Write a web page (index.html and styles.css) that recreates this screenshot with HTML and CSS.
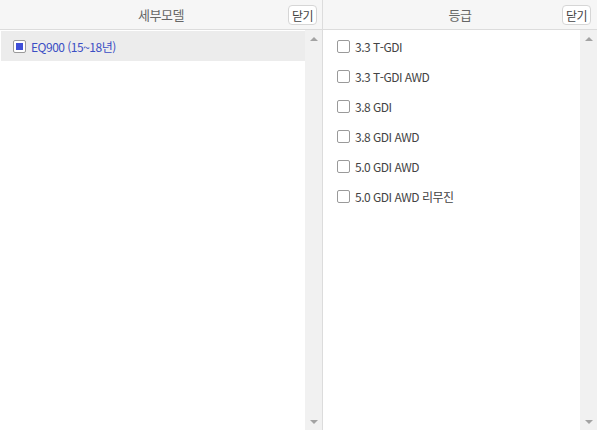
FILE: index.html
```html
<!DOCTYPE html>
<html lang="ko">
<head>
  <meta charset="UTF-8">
  <title>세부모델 / 등급</title>
  <link rel="stylesheet" href="styles.css">
</head>
<body>
  <div class="picker">
    <div class="panel panel-model">
      <div class="panel-head">
        <span class="panel-title">세부모델</span>
        <button class="close-btn">닫기</button>
      </div>
      <div class="panel-body">
        <ul class="opt-list">
          <li class="opt selected"><span class="box"></span>EQ900 (15~18년)</li>
        </ul>
        <div class="scrollbar">
          <span class="arrow up"></span>
          <span class="arrow down"></span>
        </div>
      </div>
    </div>
    <div class="panel panel-grade">
      <div class="panel-head">
        <span class="panel-title">등급</span>
        <button class="close-btn">닫기</button>
      </div>
      <div class="panel-body">
        <ul class="opt-list">
          <li class="opt"><span class="box"></span>3.3 T-GDI</li>
          <li class="opt"><span class="box"></span>3.3 T-GDI AWD</li>
          <li class="opt"><span class="box"></span>3.8 GDI</li>
          <li class="opt"><span class="box"></span>3.8 GDI AWD</li>
          <li class="opt"><span class="box"></span>5.0 GDI AWD</li>
          <li class="opt"><span class="box"></span>5.0 GDI AWD 리무진</li>
        </ul>
        <div class="scrollbar">
          <span class="arrow up"></span>
          <span class="arrow down"></span>
        </div>
      </div>
    </div>
  </div>
</body>
</html>
```
FILE: styles.css
```css
body {
  margin: 0;
  font-family: "Noto Sans CJK KR", "Noto Sans", sans-serif;
  font-size: 12px;
  color: #333;
  background: #fff;
}
.picker {
  display: flex;
  height: 430px;
  width: 597px;
  overflow: hidden;
}
.panel {
  display: flex;
  flex-direction: column;
}
.panel-model {
  width: 322px;
  border-right: 1px solid #dcdcdc;
}
.panel-grade {
  flex: 1;
}
.panel-head {
  height: 30px;
  flex: none;
  box-sizing: border-box;
  border-bottom: 1px solid #dcdcdc;
  background: #f6f6f6;
  display: flex;
  align-items: center;
  justify-content: center;
  position: relative;
}
.panel-title {
  font-size: 13px;
  color: #666;
  letter-spacing: -0.5px;
}
.close-btn {
  position: absolute;
  right: 6px;
  top: 5px;
  height: 20px;
  padding: 0 3px;
  border: 1px solid #d6d6d6;
  border-radius: 4px;
  background: #fff;
  font-family: inherit;
  font-size: 12px;
  line-height: 17px;
  color: #444;
  letter-spacing: -0.5px;
}
.panel-model .close-btn {
  right: 5px;
}
.panel-body {
  flex: 1;
  display: flex;
}
.opt-list {
  flex: 1;
  list-style: none;
  margin: 0;
  padding: 1px 0 0 1px;
}
.opt {
  height: 30px;
  display: flex;
  align-items: center;
  padding-left: 12px;
  letter-spacing: -0.5px;
  color: #444;
}
.panel-grade .opt {
  padding-left: 13px;
}
.opt.selected {
  background: #ececec;
  color: #3b4fc4;
}
.box {
  width: 11px;
  height: 11px;
  border: 1px solid #9a9a9a;
  border-radius: 2px;
  background: #fff;
  margin-right: 5px;
  box-sizing: content-box;
  display: flex;
  align-items: center;
  justify-content: center;
}
.selected .box::after {
  content: "";
  width: 7px;
  height: 7px;
  background: #3f4fd8;
}
.scrollbar {
  width: 17px;
  flex: none;
  background: #f1f1f1;
  display: flex;
  flex-direction: column;
  justify-content: space-between;
  align-items: center;
  padding: 7px 0 6px;
  box-sizing: border-box;
}
.arrow {
  width: 0;
  height: 0;
  border-left: 4px solid transparent;
  border-right: 4px solid transparent;
}
.arrow.up {
  border-bottom: 4px solid #a3a3a3;
}
.arrow.down {
  border-top: 4px solid #a3a3a3;
}
```
